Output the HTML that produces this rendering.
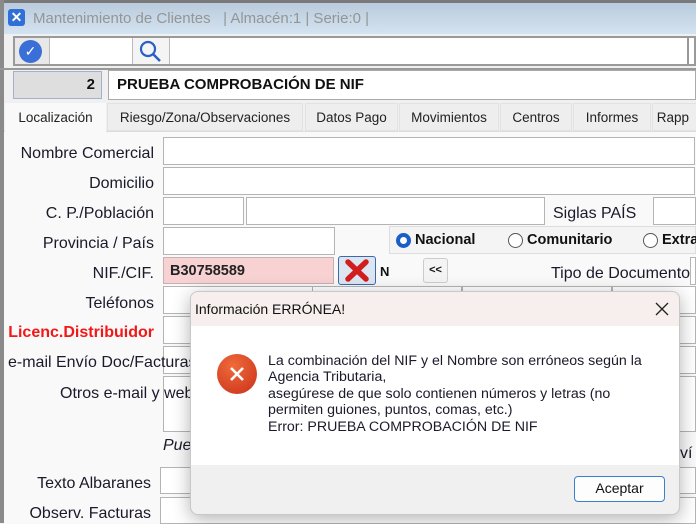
<!DOCTYPE html>
<html><head><meta charset="utf-8"><style>
*{margin:0;padding:0;box-sizing:border-box}
body{width:696px;height:523px;overflow:hidden;background:#f9f9f9;font-family:"Liberation Sans",sans-serif;position:relative;color:#111}
.a{position:absolute}
.f{position:absolute;background:#fff;border:1px solid #b4b4b4}
.l{position:absolute;font-size:16px;color:#1a1a2a;text-align:right;white-space:nowrap;z-index:2}
.tab{position:absolute;top:103px;height:28px;background:#eeeeee;border:1px solid #e2e2e2;font-size:13.5px;text-align:center;line-height:28px;color:#222}
</style></head><body>
<div class="a" style="left:0;top:0;width:696px;height:3px;background:#7a7a7a"></div>
<div class="a" style="left:0;top:0;width:4px;height:523px;background:#8a8a8a"></div>
<div class="a" style="left:4px;top:3px;width:692px;height:31px;background:linear-gradient(#b9cbdc,#d4e3f1)"></div>
<div class="a" style="left:8px;top:9px;width:17px;height:17px;background:#2f6fd6;border-radius:3px;color:#fff;font-weight:bold;font-size:14px;line-height:17px;text-align:center">✕</div>
<div class="a" style="left:33px;top:10px;font-size:15px;color:#959595;white-space:pre">Mantenimiento de Clientes   | Almacén:1 | Serie:0 |</div>
<div class="a" style="left:4px;top:34px;width:692px;height:489px;background:#f0f0f0"></div>
<div class="a" style="left:13px;top:36px;width:683px;height:30px;border:2px solid #9a9a9a;background:#fff"></div>
<div class="a" style="left:15px;top:38px;width:35px;height:26px;background:#e8e8e8;border-right:1px solid #bbb"></div>
<div class="a" style="left:19px;top:40px;width:23px;height:23px;border-radius:50%;background:#3a6fd8;color:#fff;text-align:center;font-size:14px;line-height:23px">✓</div>
<div class="a" style="left:132px;top:38px;width:38px;height:26px;background:#f4f4f4;border-left:1px solid #bbb;border-right:1px solid #bbb"></div>
<svg class="a" style="left:136px;top:38px" width="30" height="26"><circle cx="12" cy="11" r="7" fill="none" stroke="#2a5ec8" stroke-width="2.2"/><line x1="17" y1="16" x2="24" y2="23" stroke="#2a5ec8" stroke-width="2.5"/></svg>
<div class="a" style="left:687px;top:38px;width:2px;height:26px;background:#999"></div>
<div class="a" style="left:0;top:68px;width:696px;height:2px;background:#999"></div>
<div class="a" style="left:13px;top:71px;width:89px;height:28px;background:#dedede;border:1px solid #9fb4cc;font-weight:bold;font-size:15px;text-align:right;padding-right:6px;line-height:26px">2</div>
<div class="a" style="left:108px;top:70px;width:588px;height:30px;background:#fff;border:1px solid #aaa;font-weight:bold;font-size:15px;padding-left:8px;line-height:28px">PRUEBA COMPROBACIÓN DE NIF</div>
<div class="a" style="left:4px;top:131px;width:692px;height:392px;background:#f9f9f9;border-top:1px solid #ddd"></div>
<div class="tab" style="left:5px;width:101px;background:#f9f9f9;border-color:#f9f9f9;height:29px">Localización</div>
<div class="tab" style="left:107px;width:196px">Riesgo/Zona/Observaciones</div>
<div class="tab" style="left:305px;width:93px">Datos Pago</div>
<div class="tab" style="left:399px;width:100px">Movimientos</div>
<div class="tab" style="left:500px;width:72px">Centros</div>
<div class="tab" style="left:573px;width:78px">Informes</div>
<div class="tab" style="left:652px;width:60px;text-align:left">&nbsp;Rapp</div>
<div class="l" style="right:542px;top:145px">Nombre Comercial</div>
<div class="f" style="left:163px;top:137px;width:532px;height:28px"></div>
<div class="l" style="right:542px;top:175px">Domicilio</div>
<div class="f" style="left:163px;top:167px;width:532px;height:28px"></div>
<div class="l" style="right:542px;top:205px">C. P./Población</div>
<div class="f" style="left:163px;top:197px;width:81px;height:28px"></div>
<div class="f" style="left:246px;top:197px;width:299px;height:28px"></div>
<div class="l" style="left:553px;top:205px">Siglas PAÍS</div>
<div class="f" style="left:653px;top:197px;width:43px;height:28px"></div>
<div class="l" style="right:542px;top:235px">Provincia / País</div>
<div class="f" style="left:163px;top:227px;width:172px;height:28px"></div>
<div class="a" style="left:389px;top:226px;width:307px;height:28px;border:1px solid #ddd;background:#f4f4f4"></div>
<div class="a" style="left:396px;top:233px;width:15px;height:15px;border-radius:50%;border:4px solid #1a5fc8;background:#fff"></div>
<div class="a" style="left:415px;top:232px;font-weight:bold;font-size:14.5px">Nacional</div>
<div class="a" style="left:508px;top:233px;width:15px;height:15px;border-radius:50%;border:1px solid #555;background:#fff"></div>
<div class="a" style="left:527px;top:232px;font-weight:bold;font-size:14.5px">Comunitario</div>
<div class="a" style="left:643px;top:233px;width:15px;height:15px;border-radius:50%;border:1px solid #555;background:#fff"></div>
<div class="a" style="left:662px;top:232px;font-weight:bold;font-size:14.5px">Extra</div>
<div class="l" style="right:542px;top:265px">NIF./CIF.</div>
<div class="a" style="left:163px;top:257px;width:171px;height:27px;background:#f8d2d2;border:1px solid #c8b0b0;font-weight:bold;font-size:14.5px;padding-left:6px;line-height:26px;color:#222">B30758589</div>
<div class="a" style="left:338px;top:256px;width:38px;height:29px;background:#dce6f2;border:1px solid #3a6aa8;border-radius:3px"></div>
<svg class="a" style="left:343px;top:258px" width="28" height="25"><path d="M5 4 L23 21 M23 4 L5 21" stroke="#d21d1d" stroke-width="5.5" stroke-linecap="round"/></svg>
<div class="a" style="left:380px;top:264px;font-weight:bold;font-size:13px">N</div>
<div class="a" style="left:423px;top:258px;width:25px;height:25px;background:#f4f4f4;border:1px solid #ccc;border-radius:3px;font-weight:bold;font-size:11px;text-align:center;line-height:23px">&lt;&lt;</div>
<div class="l" style="left:551px;top:265px">Tipo de Documento</div>
<div class="f" style="left:690px;top:257px;width:6px;height:28px"></div>
<div class="l" style="right:542px;top:295px">Teléfonos</div>
<div class="f" style="left:163px;top:286px;width:150px;height:28px"></div>
<div class="f" style="left:312px;top:286px;width:150px;height:28px"></div>
<div class="f" style="left:462px;top:286px;width:150px;height:28px"></div>
<div class="f" style="left:612px;top:286px;width:84px;height:28px"></div>
<div class="l" style="right:542px;top:324px;color:#f01818;font-weight:bold">Licenc.Distribuidor</div>
<div class="f" style="left:163px;top:316px;width:533px;height:28px"></div>
<div class="l" style="left:8px;top:354px">e-mail Envío Doc/Facturas</div>
<div class="f" style="left:163px;top:346px;width:533px;height:28px"></div>
<div class="l" style="left:60px;top:385px">Otros e-mail y web</div>
<div class="f" style="left:163px;top:376px;width:533px;height:56px"></div>
<div class="l" style="left:163px;top:437px;font-style:italic">Puede</div>
<div class="l" style="left:680px;top:445px">ví</div>
<div class="l" style="right:545px;top:475px">Texto Albaranes</div>
<div class="f" style="left:160px;top:467px;width:536px;height:27px"></div>
<div class="l" style="right:545px;top:505px">Observ. Facturas</div>
<div class="f" style="left:160px;top:497px;width:536px;height:27px"></div>
<div class="a" style="left:190px;top:291px;width:490px;height:224px;border-radius:8px;background:#f0f0f0;border:1px solid #c8c8c8;box-shadow:0 4px 18px rgba(0,0,0,.3);overflow:hidden;z-index:5">
 <div class="a" style="left:0;top:0;width:490px;height:34px;background:#f7eeee"></div>
 <div class="a" style="left:4px;top:9px;font-size:14px;color:#111">Información ERRÓNEA!</div>
 <svg class="a" style="left:464px;top:10px" width="14" height="14"><path d="M1 1L13 13M13 1L1 13" stroke="#222" stroke-width="1.3"/></svg>
 <div class="a" style="left:0;top:34px;width:490px;height:139px;background:#fff"></div>
 <div class="a" style="left:26px;top:62px;width:40px;height:40px;border-radius:50%;background:radial-gradient(circle at 40% 30%,#f06a3a,#c9301a)"></div>
 <svg class="a" style="left:36px;top:72px" width="20" height="20"><path d="M4 4L16 16M16 4L4 16" stroke="#fff" stroke-width="2.6"/></svg>
 <div class="a" style="left:77px;top:61px;font-size:14.2px;line-height:16.4px;color:#1a1a2a;white-space:nowrap">La combinación del NIF y el Nombre son erróneos según la<br>Agencia Tributaria,<br>asegúrese de que solo contienen números y letras (no<br>permiten guiones, puntos, comas, etc.)<br>Error: PRUEBA COMPROBACIÓN DE NIF</div>
 <div class="a" style="left:383px;top:184px;width:91px;height:26px;background:#fdfdfd;border:1.5px solid #3c7fd0;border-radius:4px;font-size:14px;text-align:center;line-height:23px">Aceptar</div>
</div>
</body></html>
